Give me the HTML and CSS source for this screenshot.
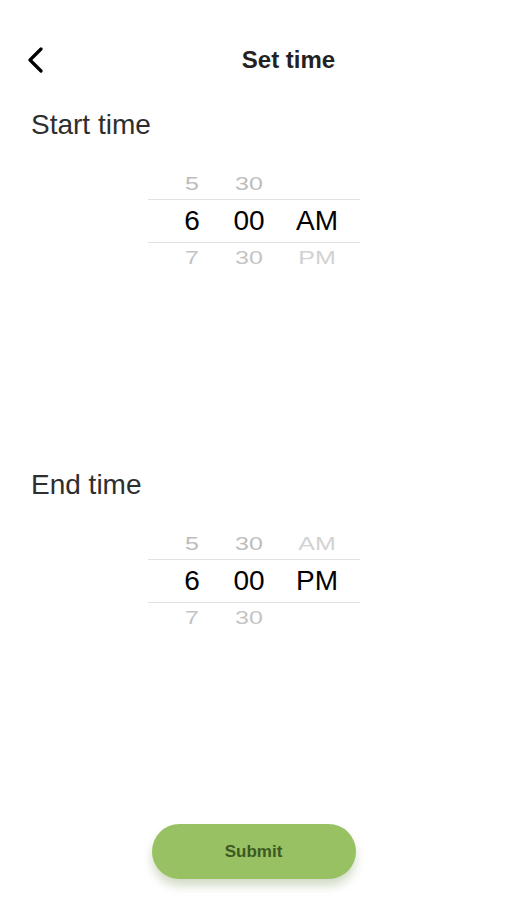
FILE: index.html
```html
<!DOCTYPE html>
<html lang="en">
<head>
  <meta charset="UTF-8">
  <meta name="viewport" content="width=device-width, initial-scale=1.0">
  <title>Set time</title>
  <link rel="stylesheet" href="styles.css">
</head>
<body>
  <div class="screen">
    <header class="top-bar">
      <button class="back-button" aria-label="Back">
        <svg width="16" height="26" viewBox="0 0 16 26">
          <polyline points="13,2 2,13 13,24" fill="none" stroke="#000" stroke-width="3.2" stroke-linecap="round" stroke-linejoin="round"/>
        </svg>
      </button>
      <h1>Set time</h1>
    </header>

    <section class="time-section">
      <h2>Start time</h2>
      <div class="picker">
        <div class="picker-row faded">
          <span>5</span><span>30</span><span></span>
        </div>
        <div class="picker-row selected">
          <span>6</span><span>00</span><span>AM</span>
        </div>
        <div class="picker-row faded below">
          <span>7</span><span>30</span><span class="lighter">PM</span>
        </div>
      </div>
    </section>

    <section class="time-section">
      <h2>End time</h2>
      <div class="picker">
        <div class="picker-row faded">
          <span>5</span><span>30</span><span class="lighter">AM</span>
        </div>
        <div class="picker-row selected">
          <span>6</span><span>00</span><span>PM</span>
        </div>
        <div class="picker-row faded below">
          <span>7</span><span>30</span><span></span>
        </div>
      </div>
    </section>

    <button class="submit-button">Submit</button>
  </div>
</body>
</html>
```

FILE: styles.css
```css
* {
  margin: 0;
  padding: 0;
  box-sizing: border-box;
}

body {
  font-family: "Liberation Sans", Arial, sans-serif;
  background: #fff;
  color: #2b2b2b;
}

.screen {
  display: flex;
  flex-direction: column;
  height: 100vh;
}

.top-bar {
  display: flex;
  align-items: center;
  height: 44px;
  margin-top: 38px;
  padding-left: 28px;
}

.back-button {
  background: none;
  border: none;
  width: 16px;
  height: 26px;
  display: flex;
  cursor: pointer;
}

.top-bar h1 {
  flex: 1;
  text-align: center;
  padding-left: 26px;
  font-size: 24px;
  font-weight: 700;
  color: #222;
}

.time-section {
  height: 360px;
  padding-top: 27px;
}

.time-section h2 {
  font-size: 28px;
  font-weight: 400;
  line-height: 32px;
  padding-left: 31px;
  color: #2e2e2e;
}

.picker {
  width: 212px;
  margin: 28px 0 0 148px;
}

.picker-row {
  display: grid;
  grid-template-columns: 48px 56px 70px;
  column-gap: 5px;
  padding-left: 20px;
  text-align: center;
}

.picker-row.faded {
  height: 30px;
  line-height: 30px;
  font-size: 25px;
  color: #bdbdbd;
  overflow: hidden;
}

.picker-row.faded span {
  display: block;
  transform: scaleY(0.72);
}

.picker-row.below {
  height: 26px;
  color: #c4c4c4;
}

.picker-row .lighter {
  color: #d2d2d2;
}

.picker-row.selected {
  height: 44px;
  line-height: 42px;
  font-size: 28px;
  color: #000;
  border-top: 1px solid #e2e2e2;
  border-bottom: 1px solid #e2e2e2;
}

.submit-button {
  margin: auto auto 21px;
  width: 204px;
  height: 55px;
  border: none;
  border-radius: 28px;
  background: #97c162;
  color: #3d5a22;
  font-family: "Liberation Sans", Arial, sans-serif;
  font-size: 17px;
  font-weight: 700;
  box-shadow: 0 7px 10px rgba(110, 140, 70, 0.3);
  cursor: pointer;
}
```
